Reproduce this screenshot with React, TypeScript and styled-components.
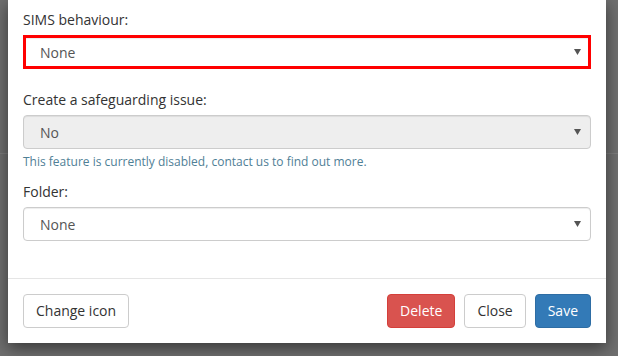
import styled, { createGlobalStyle } from "styled-components";

const GlobalStyle = createGlobalStyle`
  html, body {
    margin: 0;
    padding: 0;
    height: 100%;
  }
  body {
    background: #6f6f6f;
    font-family: "Open Sans", "Liberation Sans", sans-serif;
    font-size: 14px;
    color: #333;
    overflow: hidden;
  }
`;

const Backdrop = styled.div`
  position: relative;
  width: 618px;
  height: 356px;
  padding: 0 12px 0 8px;
  box-sizing: border-box;
  background: #6f6f6f;

  &::after {
    content: "";
    position: absolute;
    left: 0;
    right: 0;
    top: 153px;
    height: 1px;
    background: #7c7c7c;
  }
`;

const Modal = styled.div`
  position: relative;
  z-index: 1;
  width: 598px;
  height: 343px;
  background: #fff;
  box-shadow: 0 5px 15px rgba(0, 0, 0, 0.5);
  display: flex;
  flex-direction: column;
`;

const Body = styled.div`
  flex: 1;
  padding: 10px 15px 0 15px;
`;

const Group = styled.div<{ $gap: number }>`
  margin-bottom: ${({ $gap }) => $gap}px;
`;

const Label = styled.label`
  display: block;
  line-height: 20px;
  margin-bottom: 5px;
  color: #333;
`;

const SelectBox = styled.div<{ $disabled?: boolean; $error?: boolean }>`
  position: relative;
  box-sizing: border-box;
  height: 34px;
  display: flex;
  align-items: center;
  padding-left: ${({ $error }) => ($error ? "14px" : "16px")};
  border: ${({ $error }) => ($error ? "3px solid #ff0000" : "1px solid #ccc")};
  border-radius: ${({ $error }) => ($error ? "0" : "4px")};
  background: ${({ $disabled }) => ($disabled ? "#eee" : "#fff")};
  box-shadow: inset 0 1px 1px rgba(0, 0, 0, 0.075);
  color: #555;
  font-size: 14px;
`;

const Arrow = styled.svg<{ $error?: boolean }>`
  position: absolute;
  right: ${({ $error }) => ($error ? "7px" : "9px")};
  top: 50%;
  margin-top: -3px;
`;

const Help = styled.p`
  margin: 4px 0 0;
  font-size: 12px;
  line-height: 17px;
  color: #4f8096;
`;

const Footer = styled.div`
  border-top: 1px solid #e5e5e5;
  padding: 15px;
  display: flex;
  align-items: center;
`;

const Spacer = styled.div`
  flex: 1;
`;

const Button = styled.button<{ $variant?: "default" | "danger" | "primary" }>`
  font-family: inherit;
  font-size: 14px;
  line-height: 20px;
  padding: 6px 12px;
  border-radius: 4px;
  margin-left: ${({ $variant }) => ($variant ? "9px" : "0")};
  border: 1px solid
    ${({ $variant }) =>
      $variant === "danger" ? "#d43f3a" : $variant === "primary" ? "#2e6da4" : "#ccc"};
  background: ${({ $variant }) =>
    $variant === "danger" ? "#d9534f" : $variant === "primary" ? "#337ab7" : "#fff"};
  color: ${({ $variant }) => ($variant === "danger" || $variant === "primary" ? "#fff" : "#333")};
`;

function Select({ value, disabled, error }: { value: string; disabled?: boolean; error?: boolean }) {
  return (
    <SelectBox $disabled={disabled} $error={error}>
      {value}
      <Arrow $error={error} width="7" height="6" viewBox="0 0 7 6">
        <path d="M0 0 H7 L3.5 6 Z" fill="#555" />
      </Arrow>
    </SelectBox>
  );
}

export default function App() {
  return (
    <>
      <GlobalStyle />
      <Backdrop>
        <Modal>
          <Body>
            <Group $gap={21}>
              <Label>SIMS behaviour:</Label>
              <Select value="None" error />
            </Group>
            <Group $gap={12}>
              <Label>Create a safeguarding issue:</Label>
              <Select value="No" disabled />
              <Help>This feature is currently disabled, contact us to find out more.</Help>
            </Group>
            <Group $gap={0}>
              <Label>Folder:</Label>
              <Select value="None" />
            </Group>
          </Body>
          <Footer>
            <Button>Change icon</Button>
            <Spacer />
            <Button $variant="danger">Delete</Button>
            <Button $variant="default">Close</Button>
            <Button $variant="primary">Save</Button>
          </Footer>
        </Modal>
      </Backdrop>
    </>
  );
}
